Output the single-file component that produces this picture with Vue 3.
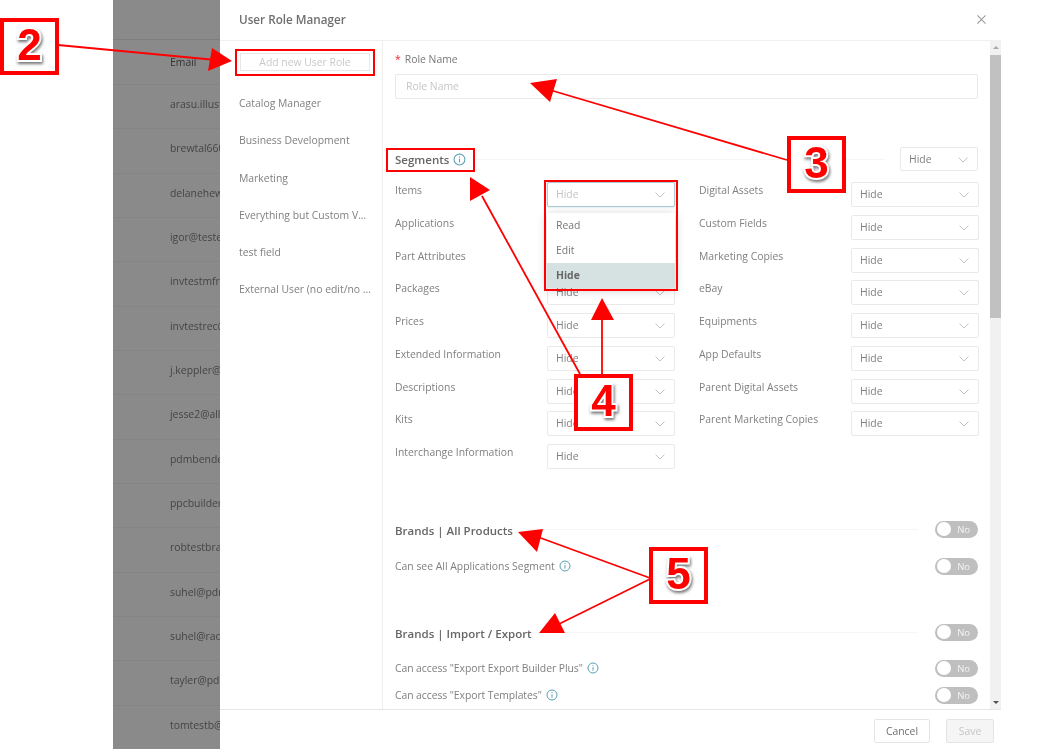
<script setup>
const emails = ['arasu.illust', 'brewtal660', 'delanehew', 'igor@teste', 'invtestmfr', 'invtestrec@', 'j.keppler@', 'jesse2@all', 'pdmbende', 'ppcbuilder', 'robtestbra', 'suhel@pdr', 'suhel@rad', 'tayler@pd', 'tomtestb@']
const roles = ['Catalog Manager', 'Business Development', 'Marketing', 'Everything but Custom V...', 'test field', 'External User (no edit/no ...']
const segments = [
  ['Items', 'Digital Assets'],
  ['Applications', 'Custom Fields'],
  ['Part Attributes', 'Marketing Copies'],
  ['Packages', 'eBay'],
  ['Prices', 'Equipments'],
  ['Extended Information', 'App Defaults'],
  ['Descriptions', 'Parent Digital Assets'],
  ['Kits', 'Parent Marketing Copies'],
  ['Interchange Information', null]
]
const segmentCells = segments.flatMap((r, i) => [
  { label: r[0], focus: i === 0 },
  { label: r[1], focus: false }
])
const arrows = [
  { line: '58,45 216,60', head: '232,61 212,48 208,71' },
  { line: '787,160 550,90', head: '530,83 557,79 550,102' },
  { line: '580,374 482,196', head: '470,177 490,190 470,201' },
  { line: '602,374 602,318', head: '602,298 591,320 614,320' },
  { line: '650,578 538,537', head: '518,532 543,529 537,552' },
  { line: '650,579 555,626', head: '539,633 555,613 565,633' }
]
const marks = [
  { n: '2', cls: 'm2' },
  { n: '3', cls: 'm3' },
  { n: '4', cls: 'm4' },
  { n: '5', cls: 'm5' }
]
</script>

<template>
  <div class="page">
    <div class="shot">
      <div class="gutter"></div>
      <div class="backdrop">
        <div class="bd-top"></div>
        <div class="bd-head">Email</div>
        <div v-for="e in emails" :key="e" class="bd-row">{{ e }}</div>
      </div>

      <section class="modal">
        <header class="m-head">
          <span class="m-title">User Role Manager</span>
          <svg class="close" width="9" height="9" viewBox="0 0 10 10"><path d="M.5.5l9 9M9.500.5l-9 9" stroke="#9a9a9a" stroke-width="1.200" fill="none"/></svg>
        </header>

        <div class="m-body">
          <aside class="side">
            <div class="add">Add new User Role</div>
            <div v-for="r in roles" :key="r" class="role">{{ r }}</div>
          </aside>

          <main class="content">
            <div class="field-label"><span class="req">*</span>Role Name</div>
            <div class="input">Role Name</div>

            <div class="sec-head seg-head">
              <span class="sec-title">Segments</span>
              <svg class="info" viewBox="0 0 12 12"><circle cx="6" cy="6" r="5" fill="none" stroke="#5aa0b5" stroke-width="1"/><path d="M6 5.200v3.400M6 3.200v1" stroke="#5aa0b5" stroke-width="1"/></svg>
              <span class="rule"></span>
              <div class="sel sel-top"><span>Hide</span><svg class="chev" viewBox="0 0 10 6"><path d="M.5.500L5 5l4.500-4.500" fill="none" stroke="#c4c4c4"/></svg></div>
            </div>

            <div class="seg-grid">
              <div v-for="(c, i) in segmentCells" :key="i" class="cell">
                <template v-if="c.label">
                  <span class="cell-label">{{ c.label }}</span>
                  <div class="sel" :class="{ focus: c.focus }">
                    <span>Hide</span>
                    <svg class="chev" viewBox="0 0 10 6"><path d="M.5.500L5 5l4.500-4.500" fill="none" stroke="#c4c4c4"/></svg>
                    <div v-if="c.focus" class="menu">
                      <div class="opt">Read</div>
                      <div class="opt">Edit</div>
                      <div class="opt on">Hide</div>
                    </div>
                  </div>
                </template>
              </div>
            </div>

            <div class="sec-head brand brand-a">
              <span class="sec-title">Brands | All Products</span>
              <span class="rule"></span>
              <span class="toggle"><i></i>No</span>
            </div>
            <div class="perm perm-a">
              <span>Can see All Applications Segment</span>
              <svg class="info sm" viewBox="0 0 12 12"><circle cx="6" cy="6" r="5" fill="none" stroke="#5aa0b5" stroke-width="1"/><path d="M6 5.200v3.400M6 3.200v1" stroke="#5aa0b5" stroke-width="1"/></svg>
              <span class="toggle end"><i></i>No</span>
            </div>

            <div class="sec-head brand brand-b">
              <span class="sec-title">Brands | Import / Export</span>
              <span class="rule"></span>
              <span class="toggle"><i></i>No</span>
            </div>
            <div class="perm perm-b tight">
              <span>Can access "Export Export Builder Plus"</span>
              <svg class="info sm" viewBox="0 0 12 12"><circle cx="6" cy="6" r="5" fill="none" stroke="#5aa0b5" stroke-width="1"/><path d="M6 5.200v3.400M6 3.200v1" stroke="#5aa0b5" stroke-width="1"/></svg>
              <span class="toggle end"><i></i>No</span>
            </div>
            <div class="perm perm-c tight">
              <span>Can access "Export Templates"</span>
              <svg class="info sm" viewBox="0 0 12 12"><circle cx="6" cy="6" r="5" fill="none" stroke="#5aa0b5" stroke-width="1"/><path d="M6 5.200v3.400M6 3.200v1" stroke="#5aa0b5" stroke-width="1"/></svg>
              <span class="toggle end"><i></i>No</span>
            </div>
          </main>

          <div class="scroll">
            <span class="arr up"></span>
            <div class="thumb"></div>
            <span class="arr down"></span>
          </div>
        </div>

        <footer class="m-foot">
          <button class="btn">Cancel</button>
          <button class="btn save">Save</button>
        </footer>
      </section>
    </div>

    <!-- annotation layer painted over the screenshot -->
    <div class="frame f-add"></div>
    <div class="frame f-seg"></div>
    <div class="frame f-menu"></div>
    <svg class="arrows" width="1052" height="749" viewBox="0 0 1052 749">
      <g v-for="(a, i) in arrows" :key="i">
        <polyline :points="a.line" fill="none" stroke="#f00" stroke-width="1.800"/>
        <polygon :points="a.head" fill="#f00"/>
      </g>
    </svg>
    <div v-for="m in marks" :key="m.n" class="mark" :class="m.cls"><span>{{ m.n }}</span></div>
  </div>
</template>

<style>
html, body { margin: 0; background: #fff; }
</style>

<style scoped>
.page {
  position: relative;
  width: 1052px;
  height: 749px;
  overflow: hidden;
  background: #fff;
  font-family: "Open Sans", sans-serif;
  font-size: 10.400px;
  color: #7d7d7d;
}
.shot { display: flex; height: 749px; filter: blur(0.6px); }
.gutter { width: 113px; flex: none; }
.backdrop { width: 107px; flex: none; background: #8a8a8a; overflow: hidden; color: #444; white-space: nowrap; }
.bd-top { height: 39px; border-bottom: 1px solid #7e7e7e; }
.bd-head { height: 44px; line-height: 44px; padding-left: 57px; color: #333; }
.bd-row {
  height: 44.330px;
  line-height: 39px;
  padding-left: 57px;
  border-top: 1px solid #848484;
  box-sizing: border-box;
}
.modal { width: 781px; flex: none; height: 749px; display: flex; flex-direction: column; background: #fff; }
.m-head {
  height: 41px;
  flex: none;
  box-sizing: border-box;
  padding: 0 15px 2px 19px;
  display: flex;
  align-items: center;
  justify-content: space-between;
  border-bottom: 1px solid #f0f0f0;
}
.m-title { font-size: 11.700px; font-weight: 600; color: #6f6f6f; }
.m-body { flex: 1; min-height: 0; display: flex; }
.side { width: 163px; flex: none; box-sizing: border-box; border-right: 1px solid #eee; padding: 12px 9px 0 19px; }
.add {
  height: 18px;
  line-height: 16px;
  width: 130px;
  margin-left: 1px;
  border: 1px solid #e8e8e8;
  text-align: center;
  color: #c9c9c9;
  box-sizing: border-box;
  margin-bottom: 14px;
}
.role { height: 37.300px; line-height: 37.300px; white-space: nowrap; color: #808080; }
.content {
  flex: 1;
  min-width: 0;
  position: relative;
  box-sizing: border-box;
  padding: 10px 12px 0 12px;
  overflow: hidden;
}
.field-label { height: 23px; line-height: 17px; color: #777; }
.req { color: #f5222d; margin-right: 4px; }
.input {
  height: 25px;
  line-height: 23px;
  box-sizing: border-box;
  border: 1px solid #e8e8e8;
  border-radius: 2px;
  padding-left: 10px;
  color: #c6c6c6;
}
.sec-head { display: flex; align-items: center; }
.seg-head { margin-top: 48px; height: 24px; }
.sec-title { font-size: 11.500px; font-weight: 600; color: #666; white-space: nowrap; }
.brand .sec-title { margin-top: 3px; }
.info { width: 13px; height: 13px; margin-left: 4px; flex: none; }
.info.sm { width: 12px; height: 12px; margin-left: 4px; }
.rule { flex: 1; height: 1px; background: #f6f6f6; margin: 0 15px 0 9px; }
.brand .rule { margin-right: 17px; }
.sel {
  position: relative;
  width: 128px;
  height: 25px;
  line-height: 23px;
  box-sizing: border-box;
  border: 1px solid #e9e9e9;
  border-radius: 2px;
  padding-left: 8px;
  background: #fff;
  color: #7f7f7f;
  flex: none;
}
.sel-top { width: 78px; height: 24px; }
.chev { position: absolute; right: 9px; top: 9px; width: 10px; height: 6px; }
.sel.focus { border-color: #a9cdd2; color: #c4c4c4; box-shadow: 0 0 2px #b9d6da; z-index: 2; }
.menu {
  position: absolute;
  left: -1px;
  top: 30px;
  width: 128px;
  height: 75px;
  background: #fff;
  box-shadow: 0 2px 10px rgba(0, 0, 0, .2);
  color: #777;
  z-index: 3;
}
.opt { height: 25px; line-height: 25px; padding-left: 9px; }
.opt.on { background: #d6e2e2; font-weight: 700; color: #666; }
.seg-grid {
  margin-top: 11px;
  display: grid;
  grid-template-columns: 280px 280px;
  column-gap: 24px;
  grid-auto-rows: 32.750px;
}
.cell { display: flex; justify-content: space-between; white-space: nowrap; }
.cell-label { line-height: 17px; color: #7f7f7f; }
.brand { height: 18px; }
.brand-a { margin-top: 43.250px; }
.brand-b { margin-top: 48px; }
.perm { display: flex; align-items: center; height: 18px; white-space: nowrap; color: #7f7f7f; }
.tight > span:first-child { letter-spacing: -0.07px; }
.perm-a { margin-top: 19px; }
.perm-b { margin-top: 18px; }
.perm-c { margin-top: 9px; }
.toggle {
  position: relative;
  width: 43px;
  height: 17px;
  line-height: 17px;
  flex: none;
  border-radius: 9px;
  background: #bfbfbf;
  color: #f4f4f4;
  font-size: 9.500px;
  text-align: right;
  padding-right: 8px;
  box-sizing: border-box;
}
.toggle i { position: absolute; left: 1.500px; top: 1.500px; width: 14px; height: 14px; border-radius: 50%; background: #fff; }
.toggle.end { margin-left: auto; }
.scroll { width: 11px; flex: none; background: #f1f1f1; display: flex; flex-direction: column; align-items: center; }
.arr { flex: none; width: 0; height: 0; border-left: 3px solid transparent; border-right: 3px solid transparent; }
.arr.up { border-bottom: 3px solid #a8a8a8; margin: 5px 0 6px; }
.thumb { width: 100%; height: 263px; flex: none; background: #c1c1c1; }
.arr.down { margin-top: auto; margin-bottom: 5px; border-top: 3px solid #505050; }
.m-foot {
  height: 40px;
  flex: none;
  box-sizing: border-box;
  border-top: 1px solid #e6e6e6;
  display: flex;
  justify-content: flex-end;
  gap: 16px;
  padding: 9px 7px 0 0;
}
.btn {
  width: 56px;
  height: 24px;
  font: inherit;
  color: #6f6f6f;
  background: #fff;
  border: 1px solid #e4e4e4;
  border-radius: 2px;
  padding: 0;
}
.btn.save { width: 48px; background: #f5f5f5; color: #c6c6c6; }

.frame { position: absolute; box-sizing: border-box; border: 2px solid #f00; }
.f-add { left: 235px; top: 49px; width: 140px; height: 27px; }
.f-seg { left: 386px; top: 148px; width: 89px; height: 24px; }
.f-menu { left: 544px; top: 180px; width: 134px; height: 111px; }
.arrows { position: absolute; left: 0; top: 0; pointer-events: none; }
.mark {
  position: absolute;
  box-sizing: border-box;
  width: 59px;
  height: 57px;
  border: 4px solid #f00;
  padding-bottom: 3px;
  background: #fff;
  display: flex;
  align-items: center;
  justify-content: center;
  font-family: "Liberation Sans", sans-serif;
  font-weight: 700;
  font-size: 44px;
  color: #f00;
}
.mark span {
  -webkit-text-stroke: 4px #fff;
  paint-order: stroke fill;
  filter: drop-shadow(1px 2px 1.500px rgba(0, 0, 0, .55));
}
.m2 { left: 0; top: 18px; }
.m3 { left: 787px; top: 136px; }
.m4 { left: 574px; top: 374px; }
.m5 { left: 649px; top: 547px; }
</style>
